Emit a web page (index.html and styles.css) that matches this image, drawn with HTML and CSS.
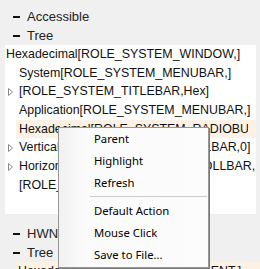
FILE: index.html
```html
<!DOCTYPE html>
<html lang="en">
<head>
    <meta charset="UTF-8">
    <meta name="viewport" content="width=device-width, initial-scale=1.0">
    <title>Accessibility Tree</title>
    <link rel="stylesheet" href="styles.css">
</head>
<body>
    <div class="group-head first">
        <div class="head-row"><span class="dash"></span>Accessible</div>
        <div class="head-row"><span class="dash"></span>Tree</div>
    </div>

    <div class="tree-panel">
        <div class="node">Hexadecimal[ROLE_SYSTEM_WINDOW,]</div>
        <div class="node child">System[ROLE_SYSTEM_MENUBAR,]</div>
        <div class="node child"><svg class="arrow" width="5" height="8" viewBox="0 0 5 8"><path d="M0.5 0.5 L4.5 4 L0.5 7.5 Z" fill="#fff" stroke="#8a8a8a"/></svg>[ROLE_SYSTEM_TITLEBAR,Hex]</div>
        <div class="node child">Application[ROLE_SYSTEM_MENUBAR,]</div>
        <div class="node child selected"><span class="clip">Hexadecimal[ROLE_SYSTEM_RADIOBUTTON,]</span></div>
        <div class="node child"><svg class="arrow" width="5" height="8" viewBox="0 0 5 8"><path d="M0.5 0.5 L4.5 4 L0.5 7.5 Z" fill="#fff" stroke="#8a8a8a"/></svg>Vertical[ROLE_SYSTEM_SCROLLBAR,0]</div>
        <div class="node child"><svg class="arrow" width="5" height="8" viewBox="0 0 5 8"><path d="M0.5 0.5 L4.5 4 L0.5 7.5 Z" fill="#fff" stroke="#8a8a8a"/></svg>Horizontal[ROLE_SYSTEM_SCROLLBAR,1]</div>
        <div class="node child">[ROLE_SYSTEM_GRIP]</div>
    </div>

    <div class="group-head second">
        <div class="head-row"><span class="dash"></span>HWND</div>
        <div class="head-row"><span class="dash"></span>Tree</div>
    </div>

    <div class="tree-panel nested">
        <div class="node selected">Hexadecimal[ROLE_SYSTEM_CLIENT,]</div>
    </div>

    <div class="context-menu">
        <div class="menu-item">Parent</div>
        <div class="menu-item">Highlight</div>
        <div class="menu-item">Refresh</div>
        <div class="menu-sep"></div>
        <div class="menu-item">Default Action</div>
        <div class="menu-item">Mouse Click</div>
        <div class="menu-item">Save to File...</div>
    </div>
</body>
</html>
```

FILE: styles.css
```css
body {
    margin: 0;
    background-color: #f0f0f0;
    font-family: "Liberation Sans", Arial, sans-serif;
    font-size: 12.4px;
    color: #1a1a1a;
    overflow: hidden;
    height: 269px;
}
.group-head.first {
    padding-top: 7px;
}
.group-head.second {
    padding-top: 10px;
}
.head-row {
    height: 19px;
    line-height: 19px;
    display: flex;
    align-items: center;
    padding-left: 13px;
    font-size: 13px;
    color: #222;
}
.dash {
    width: 7px;
    height: 2px;
    background-color: #111;
    margin-right: 7px;
}
.tree-panel {
    margin-left: 5px;
    width: 251px;
    height: 169px;
    background-color: #fff;
    overflow: hidden;
}
.tree-panel.nested {
    margin-left: 16px;
    width: 244px;
    height: 20px;
}
.node {
    height: 18.7px;
    line-height: 18.7px;
    white-space: nowrap;
    padding-left: 1px;
    position: relative;
    color: #111;
}
.node.child {
    padding-left: 14px;
}
.node.selected {
    background-color: #fdf1e4;
    margin-left: 11px;
    padding-left: 3px;
}
.nested .node.selected {
    margin-left: 0;
    padding-left: 2px;
}
.clip {
    display: inline-block;
    max-width: 229px;
    overflow: hidden;
    vertical-align: top;
}
.arrow {
    position: absolute;
    left: 3px;
    top: 6px;
}
.context-menu {
    position: absolute;
    left: 58px;
    top: 127px;
    width: 149px;
    height: 139px;
    background: linear-gradient(to right, #f1f1f1 0, #fbfbfb 26px, #fcfcfc 100%);
    border: 1px solid #979797;
    box-shadow: 1px 1px 0 #7a7a7a;
    font-family: "Noto Sans", sans-serif;
    font-size: 11.3px;
    color: #000;
}
.menu-item {
    height: 22px;
    line-height: 22px;
    padding-left: 35px;
}
.menu-sep {
    height: 1px;
    background-color: #cacaca;
    margin: 2px 1px 3px 31px;
}
```
